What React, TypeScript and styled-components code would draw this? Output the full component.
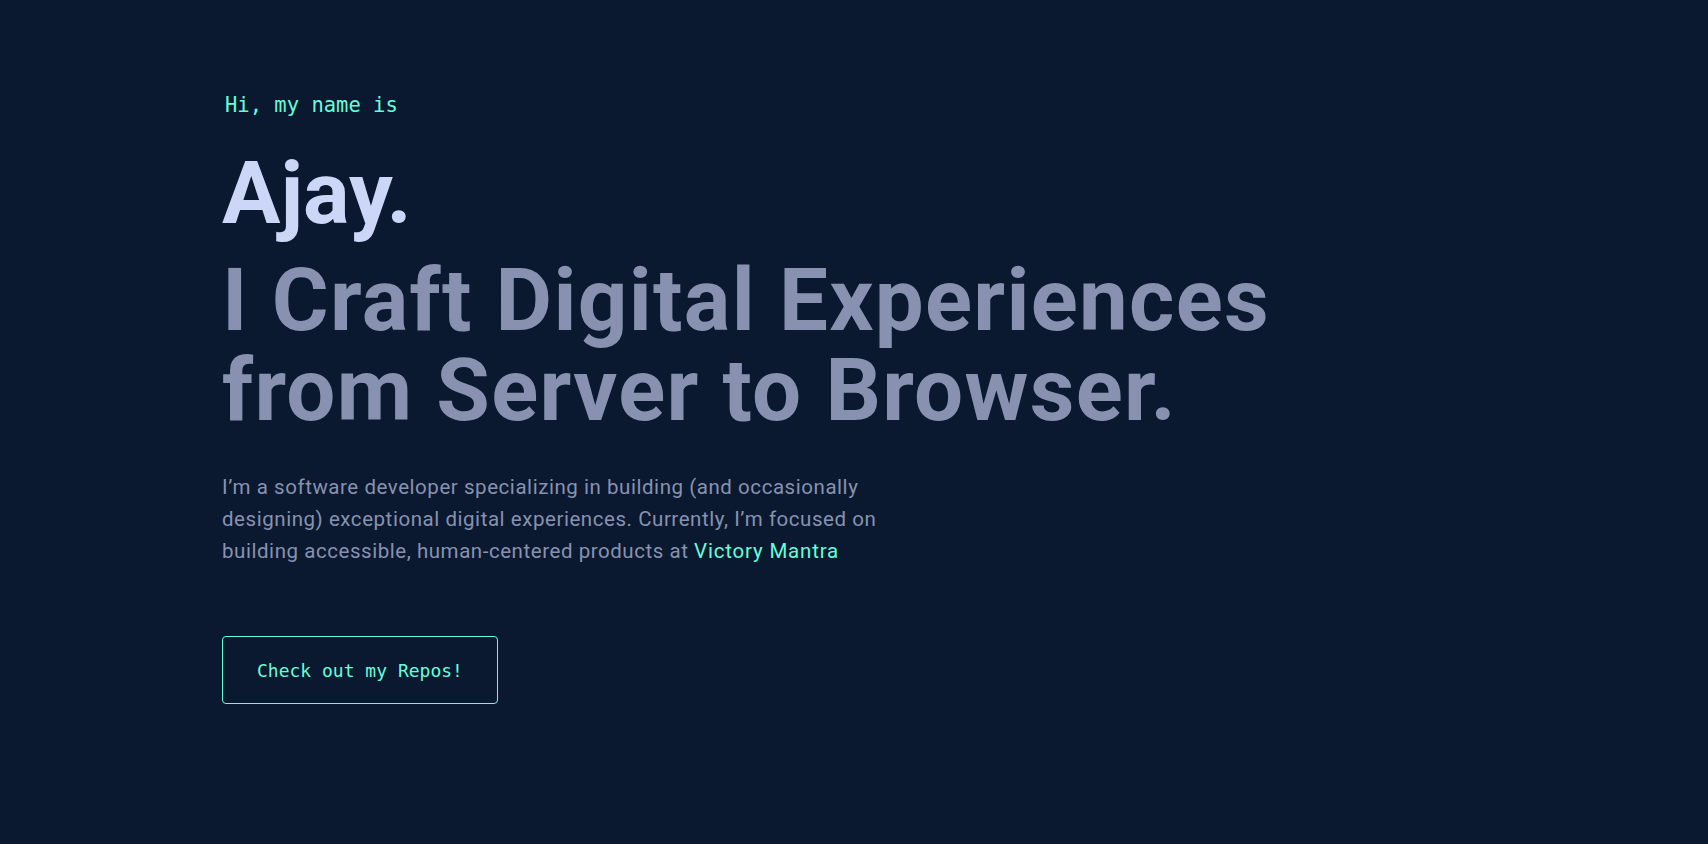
import React from "react";
import styled, { createGlobalStyle } from "styled-components";

const GlobalStyle = createGlobalStyle`
  html, body {
    margin: 0;
    padding: 0;
    background: #0a192f;
  }
  body {
    font-family: Roboto, "Liberation Sans", sans-serif;
    -webkit-font-smoothing: antialiased;
  }
  * { box-sizing: border-box; }
`;

const Page = styled.main`
  min-height: 844px;
  background: #0a192f;
  padding: 93px 0 0 222px;
`;

const Hero = styled.section`
  display: flex;
  flex-direction: column;
  align-items: flex-start;
`;

const Greeting = styled.h1`
  margin: 0 0 31px 3px;
  font-family: "DejaVu Sans Mono", "Liberation Mono", monospace;
  font-weight: 400;
  font-size: 20.5px;
  line-height: 24px;
  color: #64ffda;
`;

const BigHeading = styled.h2<{ $muted?: boolean }>`
  margin: 0;
  font-family: Roboto, "Liberation Sans", sans-serif;
  font-weight: 700;
  font-size: 87px;
  line-height: 90px;
  letter-spacing: ${(p) => (p.$muted ? "1.3px" : "0")};
  color: ${(p) => (p.$muted ? "#8892b0" : "#ccd6f6")};
`;

const Name = styled(BigHeading)`
  margin-bottom: 17px;
`;

const Intro = styled.p`
  margin: 36px 0 0;
  max-width: 700px;
  font-family: Roboto, "Liberation Sans", sans-serif;
  font-size: 20.5px;
  letter-spacing: 0.55px;
  line-height: 32px;
  color: #8892b0;
`;

const Highlight = styled.a`
  color: #64ffda;
  text-decoration: none;
  letter-spacing: 0.8px;
`;

const RepoButton = styled.a`
  margin-top: 69px;
  display: inline-flex;
  align-items: center;
  justify-content: center;
  height: 68px;
  padding: 0 34px;
  border: 1px solid #64ffda;
  border-radius: 4px;
  font-family: "DejaVu Sans Mono", "Liberation Mono", monospace;
  font-size: 18px;
  color: #64ffda;
  text-decoration: none;
  background: transparent;
`;

export default function App() {
  return (
    <>
      <GlobalStyle />
      <Page>
        <Hero>
          <Greeting>Hi, my name is</Greeting>
          <Name as="h2">Ajay.</Name>
          <BigHeading as="h3" $muted>
            I Craft Digital Experiences
            <br />
            from Server to Browser.
          </BigHeading>
          <Intro>
            I’m a software developer specializing in building (and occasionally
            designing) exceptional digital experiences. Currently, I’m focused on
            building accessible, human-centered products at{" "}
            <Highlight href="#">Victory Mantra</Highlight>
          </Intro>
          <RepoButton href="#">Check out my Repos!</RepoButton>
        </Hero>
      </Page>
    </>
  );
}
